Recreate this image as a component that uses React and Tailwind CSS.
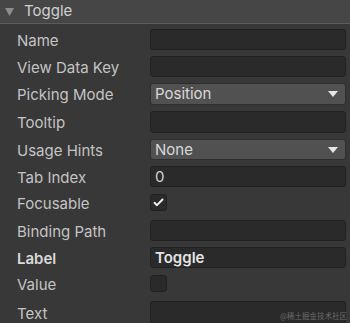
const font = { fontFamily: "Inter, 'Noto Sans', sans-serif" };

function Field({ children, bold }) {
  return (
    <div
      className={
        "h-full flex-1 rounded-[3px] border border-[#212121] bg-[#2a2a2a] px-[4px] pt-[2px] flex items-center text-[15px] " +
        (bold ? "font-semibold text-[#e4e4e4]" : "text-[#d2d2d2]")
      }
    >
      {children}
    </div>
  );
}

function Dropdown({ value }) {
  return (
    <div className="h-full flex-1 rounded-[3px] border border-[#2e2e2e] bg-[#515151] pl-[4px] pr-[7px] flex items-center justify-between text-[15px] text-[#d8d8d8]">
      <span className="pt-[1px]">{value}</span>
      <svg width="10" height="6" viewBox="0 0 10 6">
        <polygon points="0,0 10,0 5,6" fill="#e6e6e6" />
      </svg>
    </div>
  );
}

function Check({ checked }) {
  return (
    <div className="w-[17px] h-[17px] rounded-[3px] border border-[#212121] bg-[#2a2a2a] flex items-center justify-center">
      {checked && (
        <svg width="11" height="9" viewBox="0 0 11 9">
          <polyline
            points="1.5,4.8 4,7.2 9.5,1.5"
            fill="none"
            stroke="#f2f2f2"
            strokeWidth="1.9"
            strokeLinecap="round"
            strokeLinejoin="round"
          />
        </svg>
      )}
    </div>
  );
}

function Row({ label, bold, mt, h, children }) {
  return (
    <div className={"flex items-center pl-[17px] pr-[4px] " + mt + " " + h}>
      <div
        className={
          "w-[133px] shrink-0 pt-[3px] text-[15px] " +
          (bold ? "font-semibold text-[#dadada]" : "text-[#c4c4c4]")
        }
      >
        {label}
      </div>
      <div className="flex-1 h-full flex items-center">{children}</div>
    </div>
  );
}

export default function App() {
  return (
    <div
      className="relative w-[350px] h-[323px] overflow-hidden bg-[#383838]"
      style={font}
    >
      <div className="h-[24px] bg-[#464646] border-b border-[#5c5c5c] flex items-center pl-[5px]">
        <svg width="9" height="8" viewBox="0 0 9 8">
          <polygon points="0,0 9,0 4.5,8" fill="#8c8c8c" />
        </svg>
        <span className="ml-[10px] text-[15px] text-[#d0d0d0]">Toggle</span>
      </div>
      <div className="flex flex-col">
        <Row label="Name" mt="mt-[5px]" h="h-[21px]">
          <Field />
        </Row>
        <Row label="View Data Key" mt="mt-[6px]" h="h-[21px]">
          <Field />
        </Row>
        <Row label="Picking Mode" mt="mt-[6px]" h="h-[22px]">
          <Dropdown value="Position" />
        </Row>
        <Row label="Tooltip" mt="mt-[6px]" h="h-[22px]">
          <Field />
        </Row>
        <Row label="Usage Hints" mt="mt-[6px]" h="h-[21px]">
          <Dropdown value="None" />
        </Row>
        <Row label="Tab Index" mt="mt-[6px]" h="h-[21px]">
          <Field>0</Field>
        </Row>
        <Row label="Focusable" mt="mt-[7px]" h="h-[17px]">
          <Check checked />
        </Row>
        <Row label="Binding Path" mt="mt-[9px]" h="h-[21px]">
          <Field />
        </Row>
        <Row label="Label" bold mt="mt-[6px]" h="h-[21px]">
          <Field bold>Toggle</Field>
        </Row>
        <Row label="Value" mt="mt-[7px]" h="h-[17px]">
          <Check />
        </Row>
        <Row label="Text" mt="mt-[9px]" h="h-[23px]">
          <Field />
        </Row>
      </div>
      <div
        className="absolute right-[3px] bottom-[4px] text-[7.5px] leading-none text-[#7c7c7c] opacity-80"
        style={{ fontFamily: "'Noto Sans CJK SC', sans-serif" }}
      >
        @稀土掘金技术社区
      </div>
    </div>
  );
}
